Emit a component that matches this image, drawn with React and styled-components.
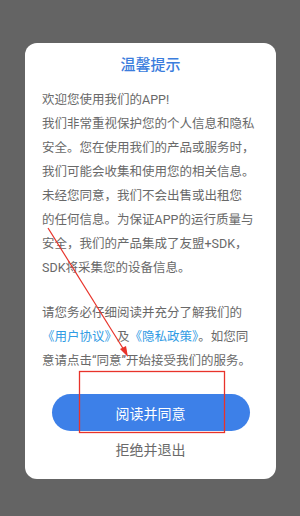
import React from "react";
import styled, { createGlobalStyle } from "styled-components";

const GlobalStyle = createGlobalStyle`
    html, body {
        margin: 0;
        padding: 0;
        background: #646464;
    }
    body {
        font-family: Roboto, "Noto Sans CJK SC", sans-serif;
    }
`;

const Screen = styled.div`
    position: relative;
    width: 300px;
    height: 516px;
    background: #646464;
    padding-top: 43px;
    box-sizing: border-box;
    overflow: hidden;
`;

const Dialog = styled.div`
    width: 251px;
    height: 436px;
    margin-left: 25px;
    background: #ffffff;
    border-radius: 12px;
    box-sizing: border-box;
    padding: 11px 17px 0;
    display: flex;
    flex-direction: column;
`;

const Title = styled.h2`
    margin: 0;
    font-size: 15px;
    line-height: 22px;
    font-weight: 500;
    color: #3b7ddd;
    text-align: center;
`;

const Paragraph = styled.div`
    margin-top: ${(props) => props.gap}px;
    font-size: 12.5px;
    line-height: 24px;
    color: #696969;
`;

const Line = styled.div`
    white-space: nowrap;
`;

const DocLink = styled.span`
    color: #2f9be4;
`;

const Actions = styled.div`
    margin-top: 21px;
    display: flex;
    flex-direction: column;
    align-items: center;
`;

const AgreeButton = styled.button`
    width: 198px;
    height: 37px;
    border: none;
    border-radius: 19px;
    background: #3d80e8;
    color: #ffffff;
    font-family: inherit;
    font-size: 14px;
    padding: 0;
`;

const RejectButton = styled.button`
    margin-top: 9px;
    border: none;
    background: none;
    color: #6a6a6a;
    font-family: inherit;
    font-size: 14px;
    line-height: 20px;
    padding: 0;
`;

// red annotation drawn over the screenshot
const Annotation = styled.svg`
    position: absolute;
    left: 0;
    top: 0;
    pointer-events: none;
`;

export default function App() {
    return (
        <Screen>
            <GlobalStyle />
            <Dialog>
                <Title>温馨提示</Title>
                <Paragraph gap={12}>
                    <Line>欢迎您使用我们的APP!</Line>
                    <Line>我们非常重视保护您的个人信息和隐私</Line>
                    <Line>安全。您在使用我们的产品或服务时，</Line>
                    <Line>我们可能会收集和使用您的相关信息。</Line>
                    <Line>未经您同意，我们不会出售或出租您</Line>
                    <Line>的任何信息。为保证APP的运行质量与</Line>
                    <Line>安全，我们的产品集成了友盟+SDK，</Line>
                    <Line>SDK将采集您的设备信息。</Line>
                </Paragraph>
                <Paragraph gap={21}>
                    <Line>请您务必仔细阅读并充分了解我们的</Line>
                    <Line>
                        <DocLink>《用户协议》</DocLink>及<DocLink>《隐私政策》</DocLink>。如您同
                    </Line>
                    <Line>意请点击“同意”开始接受我们的服务。</Line>
                </Paragraph>
                <Actions>
                    <AgreeButton>阅读并同意</AgreeButton>
                    <RejectButton>拒绝并退出</RejectButton>
                </Actions>
            </Dialog>
            <Annotation width="300" height="516" viewBox="0 0 300 516">
                <line x1="48" y1="228" x2="124" y2="350" stroke="#e8332a" strokeWidth="1.2" />
                <polygon points="128,357 120,349 126,346" fill="#e8332a" />
                <rect x="79.5" y="371.5" width="145" height="61" fill="none" stroke="#e8332a" strokeWidth="1.3" />
            </Annotation>
        </Screen>
    );
}
